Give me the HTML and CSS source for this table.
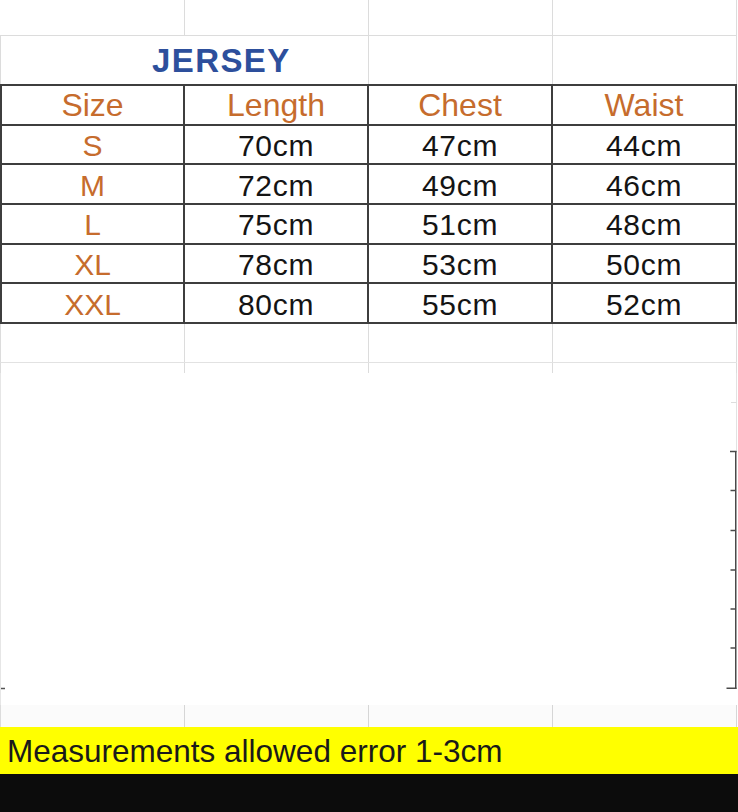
FILE: index.html
```html
<!DOCTYPE html>
<html lang="en">
<head>
<meta charset="utf-8">
<title>Jersey size chart</title>
<link rel="stylesheet" href="styles.css">
</head>
<body>
<div class="sheet">
  <div class="grid row-top">
    <div class="cell"></div><div class="cell"></div><div class="cell"></div><div class="cell"></div>
  </div>
  <div class="grid row-title">
    <div class="cell span2"><span class="jersey">JERSEY</span></div>
    <div class="cell"></div><div class="cell"></div>
  </div>
  <div class="size-table">
    <div class="tc head">Size</div><div class="tc head">Length</div><div class="tc head">Chest</div><div class="tc head">Waist</div>
    <div class="tc size">S</div><div class="tc">70cm</div><div class="tc">47cm</div><div class="tc">44cm</div>
    <div class="tc size">M</div><div class="tc">72cm</div><div class="tc">49cm</div><div class="tc">46cm</div>
    <div class="tc size">L</div><div class="tc">75cm</div><div class="tc">51cm</div><div class="tc">48cm</div>
    <div class="tc size">XL</div><div class="tc">78cm</div><div class="tc">53cm</div><div class="tc">50cm</div>
    <div class="tc size">XXL</div><div class="tc">80cm</div><div class="tc">55cm</div><div class="tc">52cm</div>
  </div>
  <div class="grid row-below">
    <div class="cell"></div><div class="cell"></div><div class="cell"></div><div class="cell"></div>
  </div>
  <div class="grid row-stub">
    <div class="cell"></div><div class="cell"></div><div class="cell"></div><div class="cell"></div>
  </div>
  <div class="blank">
    <svg class="tick-left" width="6" height="332" viewBox="0 0 6 332">
      <line x1="0" y1="315.5" x2="4" y2="315.5" stroke="#555" stroke-width="1.5"/>
    </svg>
    <svg class="bracket" width="14" height="332" viewBox="0 0 14 332">
      <line x1="13.5" y1="0" x2="13.5" y2="78" stroke="#e2e2e2" stroke-width="1"/>
      <line x1="8" y1="29.5" x2="13.5" y2="29.5" stroke="#dddddd" stroke-width="1"/>
      <line x1="12.75" y1="78" x2="12.75" y2="316" stroke="#4a4a4a" stroke-width="1.5"/>
      <line x1="7" y1="78.5" x2="13.5" y2="78.5" stroke="#4a4a4a" stroke-width="1.5"/>
      <line x1="7.5" y1="117.5" x2="13" y2="117.5" stroke="#4a4a4a" stroke-width="1.5"/>
      <line x1="7.5" y1="157.5" x2="13" y2="157.5" stroke="#4a4a4a" stroke-width="1.5"/>
      <line x1="7.5" y1="197" x2="13" y2="197" stroke="#4a4a4a" stroke-width="1.5"/>
      <line x1="7.5" y1="236" x2="13" y2="236" stroke="#4a4a4a" stroke-width="1.5"/>
      <line x1="7.5" y1="275" x2="13" y2="275" stroke="#4a4a4a" stroke-width="1.5"/>
      <line x1="3.5" y1="315.25" x2="13.5" y2="315.25" stroke="#4a4a4a" stroke-width="1.5"/>
    </svg>
  </div>
  <div class="grid row-stub2">
    <div class="cell"></div><div class="cell"></div><div class="cell"></div><div class="cell"></div>
  </div>
  <div class="note">Measurements allowed error 1-3cm</div>
  <div class="footer-bar"></div>
</div>
</body>
</html>
```
FILE: styles.css
```css
html, body {
  margin: 0;
  padding: 0;
  background: #ffffff;
}

body {
  font-family: "Liberation Sans", Arial, sans-serif;
  overflow: hidden;
}

.sheet {
  width: 738px;
  height: 812px;
  display: flex;
  flex-direction: column;
}

.grid {
  display: grid;
  grid-template-columns: repeat(4, 184px);
  width: 737px;
  box-sizing: border-box;
  border-left: 1px solid #dcdcdc;
}

.cell {
  border-right: 1px solid #dcdcdc;
  box-sizing: border-box;
}

.span2 {
  grid-column: span 2;
  display: flex;
  align-items: center;
  padding-left: 151px;
  padding-top: 1px;
}

.row-top {
  height: 36px;
  border-left: none;
  padding-left: 1px;
  border-bottom: 1px solid #dcdcdc;
}

.row-title {
  height: 48px;
}

.jersey {
  font-weight: 700;
  font-size: 33px;
  letter-spacing: 1.4px;
  color: #2d4f9c;
}

.size-table {
  display: grid;
  grid-template-columns: 183px 184px 184px 184px;
  grid-auto-rows: 39.667px;
  width: 737px;
  box-sizing: border-box;
  border-top: 2px solid #3e3e3e;
  border-left: 2px solid #3e3e3e;
}

.tc {
  display: flex;
  align-items: center;
  justify-content: center;
  box-sizing: border-box;
  border-right: 2px solid #3e3e3e;
  border-bottom: 2px solid #3e3e3e;
  font-size: 30px;
  letter-spacing: 0.7px;
  color: #141414;
  padding-top: 3px;
}

.tc.head {
  font-size: 32px;
  letter-spacing: 0;
  color: #c66c2d;
  padding-top: 2px;
}

.tc.size {
  color: #c66c2d;
  letter-spacing: 0;
}

.row-below {
  height: 39px;
  border-bottom: 1px solid #e2e2e2;
}

.row-stub {
  height: 10px;
}

.blank {
  height: 332px;
  width: 737px;
  display: flex;
  justify-content: space-between;
  border-left: 1px solid #e6e6e6;
  box-sizing: border-box;
}

.tick-left,
.bracket {
  display: block;
}

.row-stub2 {
  height: 22px;
  background: #fbfbfb;
}

.row-stub2 .cell {
  border-right-color: #d6d6d6;
}

.note {
  height: 47px;
  background: #ffff00;
  color: #1a1a1a;
  font-size: 31.5px;
  display: flex;
  align-items: center;
  padding-left: 7px;
  padding-top: 3px;
  box-sizing: border-box;
}

.footer-bar {
  height: 38px;
  background: #0c0c0c;
}
```
